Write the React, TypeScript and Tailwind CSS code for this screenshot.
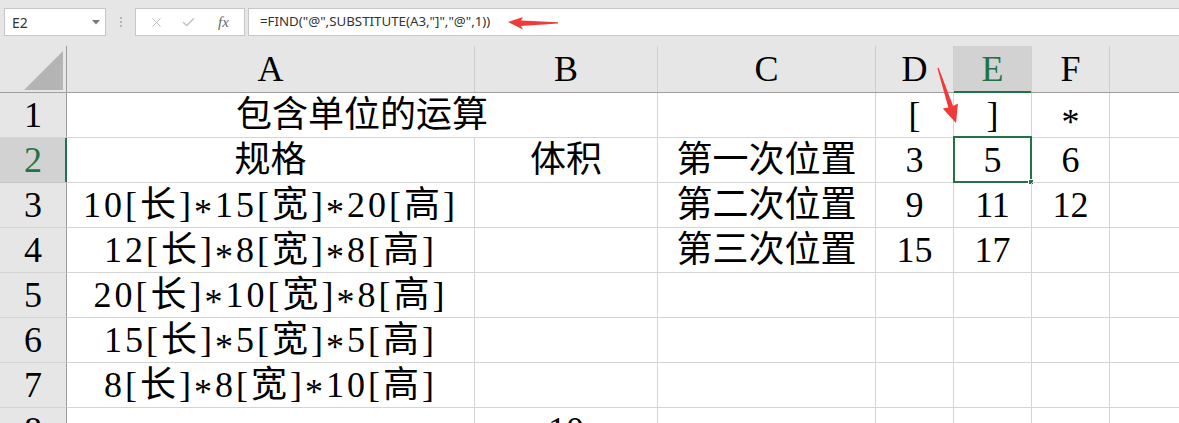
import { X, Check } from 'lucide-react'

const colW = ['w-[67px]', 'w-[408px]', 'w-[183px]', 'w-[218px]', 'w-[78px]', 'w-[78px]', 'w-[78px]', 'flex-1']

const rows = [
  ['1', '', '', '', '[', ']', '*', ''],
  ['2', '规格', '体积', '第一次位置', '3', '5', '6', ''],
  ['3', '10[长]*15[宽]*20[高]', '', '第二次位置', '9', '11', '12', ''],
  ['4', '12[长]*8[宽]*8[高]', '', '第三次位置', '15', '17', '', ''],
  ['5', '20[长]*10[宽]*8[高]', '', '', '', '', '', ''],
  ['6', '15[长]*5[宽]*5[高]', '', '', '', '', '', ''],
  ['7', '8[长]*8[宽]*10[高]', '', '', '', '', '', ''],
  ['8', '', '10', '', '', '', '', ''],
]

const letters = ['A', 'B', 'C', 'D', 'E', 'F', '']

// SimSun draws the asterisk on the middle line, Liberation Serif sets it high
function CellText({ text }: { text: string }) {
  const parts = text.split('*')
  return (
    <>
      {parts.map((p, i) => (
        <span key={i}>
          {i > 0 && <span className="relative top-[7px]">*</span>}
          {p}
        </span>
      ))}
    </>
  )
}

function FormulaBar() {
  return (
    <div className="flex h-[46px] items-start pl-[4px] pt-[8px] font-['Noto_Sans','Liberation_Sans',sans-serif]">
      {/* name box */}
      <div className="flex h-[28px] w-[102px] items-center justify-between border border-[#c6c6c6] bg-white pl-[7px] pr-[5px] text-[14px] text-[#333]">
        <span>E2</span>
        <svg width="8" height="5" viewBox="0 0 8 5">
          <polygon points="0,0 8,0 4,4.5" fill="#7a7a7a" />
        </svg>
      </div>
      <div className="ml-[14px] mt-[9px] flex flex-col gap-[2px]">
        <span className="h-[2px] w-[2px] bg-[#b5b5b5]" />
        <span className="h-[2px] w-[2px] bg-[#b5b5b5]" />
        <span className="h-[2px] w-[2px] bg-[#b5b5b5]" />
      </div>
      {/* cancel / enter / fx */}
      <div className="ml-[13px] flex h-[28px] w-[110px] items-center border border-[#c6c6c6] bg-white pl-[13px]">
        <X className="h-[15px] w-[15px] text-[#bdbdbd]" strokeWidth={1.6} />
        <Check className="ml-[17px] h-[15px] w-[15px] text-[#bdbdbd]" strokeWidth={2.2} />
        <span className="ml-[22px] font-['Liberation_Serif',serif] text-[15px] italic text-[#666]">fx</span>
      </div>
      {/* formula input */}
      <div className="ml-[3px] flex h-[28px] flex-1 items-center border-y border-l border-[#c6c6c6] bg-white pl-[11px] text-[13.3px] text-[#333]">
        =FIND("@",SUBSTITUTE(A3,"]","@",1))
      </div>
    </div>
  )
}

function ColumnHeader() {
  return (
    <div className="flex h-[47px] border-b border-[#9e9e9e] text-[36px] leading-[46px]">
      <div className={`${colW[0]} flex items-end justify-end border-r border-[#9e9e9e] pb-[2px] pr-[3px]`}>
        <svg width="39" height="39" viewBox="0 0 39 39">
          <polygon points="0,39 39,39 39,0" fill="#b4b4b4" />
        </svg>
      </div>
      {letters.map((l, i) => (
        <div
          key={i}
          className={`${colW[i + 1]} text-center ${i === 6 ? '' : 'border-r border-[#cfcfcf]'} ${
            l === 'E' ? 'relative bg-[#d2d2d2] text-[#217346]' : ''
          }`}
        >
          {l}
          {l === 'E' && <div className="absolute -bottom-[1px] left-0 right-0 h-[2px] bg-[#217346]" />}
        </div>
      ))}
    </div>
  )
}

function Row({ cells }: { cells: string[] }) {
  const n = cells[0]
  const selectedRow = n === '2'
  return (
    <div className="flex h-[45px] shrink-0 text-[36px] leading-[44px]">
      <div
        className={`${colW[0]} relative border-b border-r text-center ${
          selectedRow ? 'border-b-[#c6c6c6] border-r-[#9e9e9e] bg-[#d2d2d2] text-[#217346]' : 'border-b-[#d4d4d4] border-r-[#9e9e9e] bg-[#e6e6e6]'
        }`}
      >
        {n}
        {selectedRow && <div className="absolute -right-[1px] bottom-0 top-0 w-[2px] bg-[#217346]" />}
      </div>
      {cells.slice(1).map((c, i) => {
        const isTitle = n === '1' && i === 0
        const isSel = n === '2' && i === 4
        return (
          <div
            key={i}
            className={`${colW[i + 1]} relative whitespace-nowrap border-b border-[#d4d4d4] ${
              isTitle ? 'pl-[169px]' : 'text-center'
            } ${isTitle || i === 6 ? '' : 'border-r'} ${i === 0 && n !== '1' && n !== '2' ? 'tracking-[3px]' : ''}`}
          >
            {isTitle ? '包含单位的运算' : <CellText text={c} />}
            {isSel && (
              <>
                <div className="absolute -bottom-[1px] -left-[1px] -right-[1px] -top-[2px] border-2 border-[#217346]" />
                <div className="absolute -bottom-[3px] -right-[3px] h-[6px] w-[6px] border border-white bg-[#217346]" />
              </>
            )}
          </div>
        )
      })}
    </div>
  )
}

export default function App() {
  return (
    <div className="relative h-[423px] w-[1179px] overflow-hidden bg-[#e6e6e6] font-['Liberation_Serif','Noto_Sans_CJK_SC',serif] text-black">
      <FormulaBar />
      <ColumnHeader />
      <div className="flex flex-col bg-white">
        {rows.map((r) => (
          <Row key={r[0]} cells={r} />
        ))}
      </div>

      {/* red annotation arrows */}
      <svg className="absolute left-[500px] top-[10px]" width="62" height="24" viewBox="0 0 62 24">
        <polygon points="8,12 23,7 21,10.5 58,12.3 58,13.5 21,16 23,19.5" fill="#f03a3a" />
      </svg>
      <svg className="absolute left-[930px] top-[62px]" width="32" height="66" viewBox="0 0 32 66">
        <polygon points="26,61 28,41.4 23.1,44.1 8.6,5.8 7.4,6.2 18.3,45.6 12.8,46.4" fill="#f03a3a" />
      </svg>
    </div>
  )
}
